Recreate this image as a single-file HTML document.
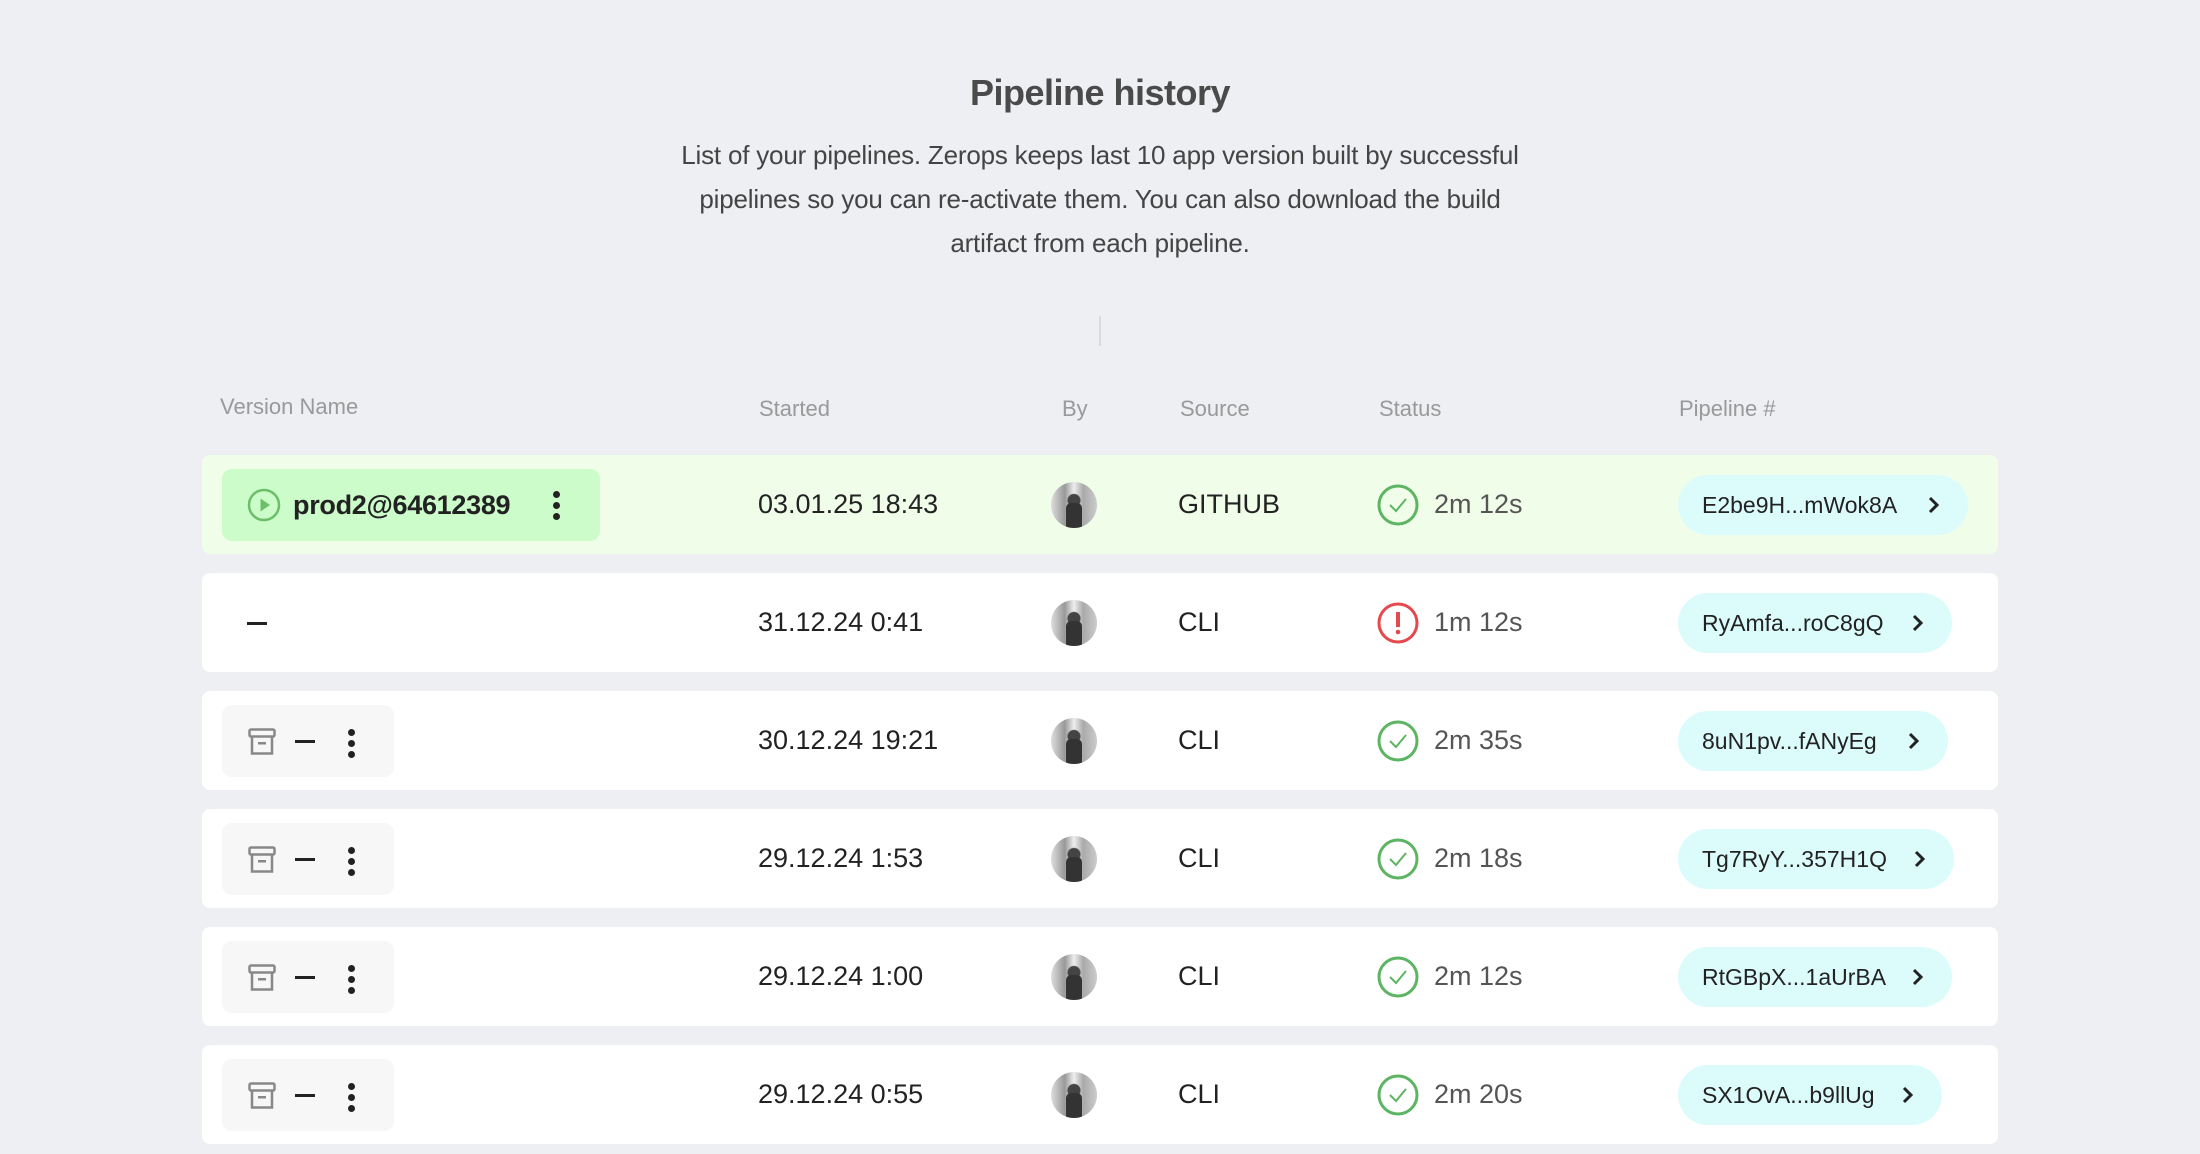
<!DOCTYPE html>
<html><head><meta charset="utf-8"><style>
*{margin:0;padding:0;box-sizing:border-box}
body{width:2200px;height:1154px;background:#eeeff3;font-family:"Liberation Sans",sans-serif;position:relative;overflow:hidden}
.a{position:absolute}
h1{position:absolute;left:0;width:2200px;text-align:center;top:72px;font-size:36px;font-weight:bold;color:#4a4a4a;letter-spacing:-0.5px}
.p{position:absolute;left:0;width:2200px;text-align:center;top:133px;font-size:26px;line-height:44px;color:#444;letter-spacing:-0.2px}
.h{position:absolute;top:396px;font-size:22px;color:#999}
.row{position:absolute;left:202px;width:1796px;height:99px;background:#fff;border-radius:8px}
.row.g{background:#f0fee9}
.c{position:absolute;top:0;height:99px;display:flex;align-items:center;font-size:27px;color:#222}
.vp{position:absolute;left:20px;top:14px;width:378px;height:72px;background:#ccfcc9;border-radius:10px}
.ap{position:absolute;left:20px;top:14px;width:172px;height:72px;background:#f7f7f8;border-radius:10px}
.pp{position:absolute;top:20px;height:60px;background:#dcfcfc;border-radius:30px;font-size:23px;color:#222;display:flex;align-items:center;padding-left:24px}
.pp svg{position:absolute;right:28px;top:21px}
.dots{position:absolute;width:7px}
.dots i{display:block;width:7px;height:7px;border-radius:50%;background:#222;margin-bottom:4px}
.av{position:absolute;left:849px;top:27px;width:46px;height:46px;border-radius:50%;background:radial-gradient(circle at 50% 40%,#444 0 6px,transparent 7px),linear-gradient(90deg,#ddd,#999 30%,#eee 50%,#aaa 70%,#ccc);overflow:hidden}
.av:after{content:"";position:absolute;left:15px;top:21px;width:16px;height:25px;background:#333;border-radius:5px 5px 0 0}
.st{position:absolute;left:1175px;top:29px}
.t{position:absolute;left:1232px;font-size:27px;color:#555}
.dash{position:absolute;height:3px;width:20px;background:#222}
</style></head><body>
<h1>Pipeline history</h1>
<div class="p">List of your pipelines. Zerops keeps last 10 app version built by successful<br>pipelines so you can re-activate them. You can also download the build<br>artifact from each pipeline.</div>
<div class="a" style="left:1099px;top:316px;width:2px;height:30px;background:#d8d9dd"></div>
<div class="h" style="left:220px;top:394px">Version Name</div>
<div class="h" style="left:759px">Started</div>
<div class="h" style="left:1062px">By</div>
<div class="h" style="left:1180px">Source</div>
<div class="h" style="left:1379px">Status</div>
<div class="h" style="left:1679px">Pipeline #</div>

<div class="row g" style="top:455px">
 <div class="vp">
  <svg class="a" style="left:25px;top:19px" width="34" height="34" viewBox="0 0 34 34"><circle cx="17" cy="17" r="15" fill="none" stroke="#6cbf6a" stroke-width="2.5"/><path d="M13.5 10.5 L23 17 L13.5 23.5Z" fill="#6cbf6a"/></svg>
  <div class="a" style="left:71px;top:21px;font-size:27px;font-weight:bold;color:#222;letter-spacing:-0.3px">prod2@64612389</div>
  <div class="dots" style="left:331px;top:22px"><i></i><i></i><i></i></div>
 </div>
 <div class="c" style="left:556px">03.01.25 18:43</div>
 <div class="av"></div>
 <div class="c" style="left:976px">GITHUB</div>
 <svg class="st" width="42" height="42" viewBox="0 0 42 42"><circle cx="21" cy="21" r="19" fill="none" stroke="#5db563" stroke-width="3"/><path d="M13 21 L19 27 L29 15" fill="none" stroke="#5db563" stroke-width="2"/></svg>
 <div class="c t">2m 12s</div>
 <div class="pp" style="left:1476px;width:290px">E2be9H...mWok8A<svg width="12" height="18" viewBox="0 0 12 18"><path d="M2 2 L9 9 L2 16" fill="none" stroke="#222" stroke-width="3"/></svg></div>
</div>

<div class="row" style="top:573px">
 <div class="dash" style="left:45px;top:49px"></div>
 <div class="c" style="left:556px">31.12.24 0:41</div>
 <div class="av"></div>
 <div class="c" style="left:976px">CLI</div>
 <svg class="st" width="42" height="42" viewBox="0 0 42 42"><circle cx="21" cy="21" r="19" fill="none" stroke="#e5484d" stroke-width="3"/><rect x="19" y="10" width="4" height="15" fill="#e5484d"/><circle cx="21" cy="30" r="2.3" fill="#e5484d"/></svg>
 <div class="c t">1m 12s</div>
 <div class="pp" style="left:1476px;width:274px">RyAmfa...roC8gQ<svg width="12" height="18" viewBox="0 0 12 18"><path d="M2 2 L9 9 L2 16" fill="none" stroke="#222" stroke-width="3"/></svg></div>
</div>

<div id="rest"></div>
<script>
var d=[["30.12.24 19:21","2m 35s","8uN1pv...fANyEg",270],["29.12.24 1:53","2m 18s","Tg7RyY...357H1Q",276],["29.12.24 1:00","2m 12s","RtGBpX...1aUrBA",274],["29.12.24 0:55","2m 20s","SX1OvA...b9llUg",264]];
var h="";
d.forEach(function(r,i){
h+='<div class="row" style="top:'+(691+i*118)+'px"><div class="ap">'+
'<svg class="a" style="left:26px;top:23px" width="28" height="28" viewBox="0 0 28 28"><rect x="1.5" y="1.5" width="25" height="7" rx="1.5" fill="none" stroke="#888" stroke-width="2.5"/><path d="M4 8.5 V25.5 H24 V8.5" fill="none" stroke="#888" stroke-width="2.5"/><rect x="10" y="14" width="8" height="2.5" fill="#888"/></svg>'+
'<div class="dash" style="left:73px;top:35px"></div><div class="dots" style="left:126px;top:24px"><i></i><i></i><i></i></div></div>'+
'<div class="c" style="left:556px">'+r[0]+'</div><div class="av"></div><div class="c" style="left:976px">CLI</div>'+
'<svg class="st" width="42" height="42" viewBox="0 0 42 42"><circle cx="21" cy="21" r="19" fill="none" stroke="#5db563" stroke-width="3"/><path d="M13 21 L19 27 L29 15" fill="none" stroke="#5db563" stroke-width="2"/></svg>'+
'<div class="c t">'+r[1]+'</div><div class="pp" style="left:1476px;width:'+r[3]+'px">'+r[2]+'<svg width="12" height="18" viewBox="0 0 12 18"><path d="M2 2 L9 9 L2 16" fill="none" stroke="#222" stroke-width="3"/></svg></div></div>';
});
document.getElementById("rest").innerHTML=h;
</script>
</body></html>
